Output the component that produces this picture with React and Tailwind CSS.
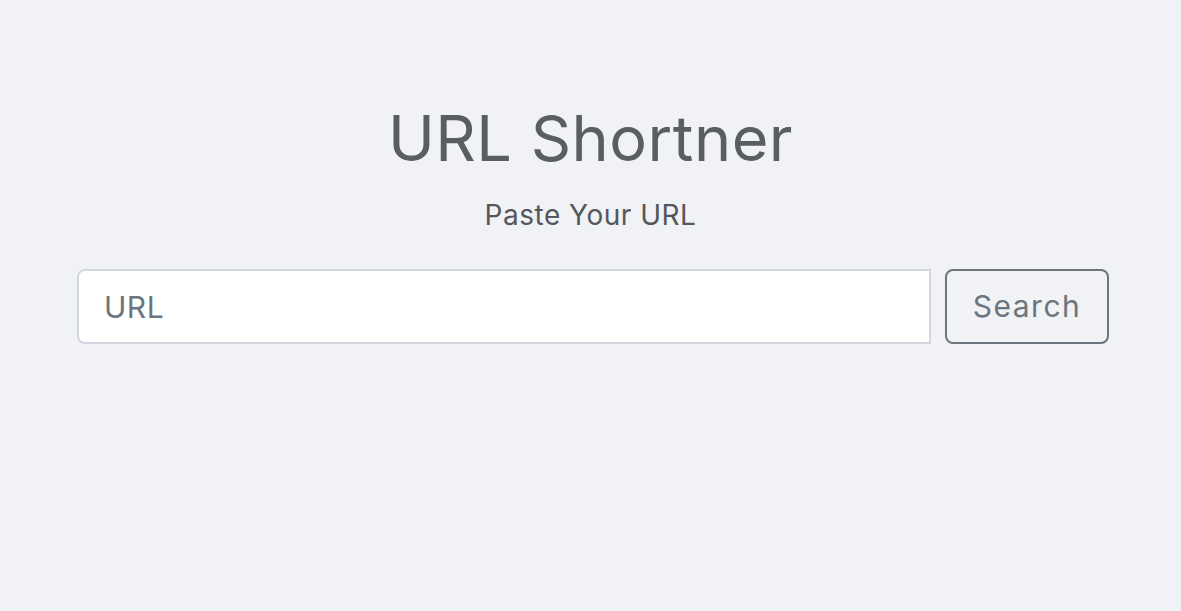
export default function App() {
  return (
    <div className="min-h-[611px] w-full bg-[#f0f2f5]" style={{ fontFamily: 'Inter, "Noto Sans", sans-serif' }}>
      <div className="flex flex-col items-center pt-[100px]">
        <h1 className="text-[63px] leading-[76px] font-normal tracking-[0.5px] text-[#5a5d61]">URL Shortner</h1>
        <p className="mt-[22px] text-[28px] leading-[34px] tracking-[0.5px] text-[#54575b]">Paste Your URL</p>
      </div>
      <div className="mt-[37px] ml-[77px] flex w-[1032px] gap-[14px]">
        <input
          type="text"
          placeholder="URL"
          className="h-[75px] flex-1 rounded-l-[8px] border-2 border-[#d3d7dd] bg-white pl-[25px] text-[30px] tracking-[0.5px] text-[#6c757d] placeholder:text-[#6c757d] outline-none"
        />
        <button className="h-[75px] w-[164px] rounded-[8px] border-2 border-[#6c757d] text-[30px] tracking-[1.5px] text-[#6c757d]">
          Search
        </button>
      </div>
    </div>
  );
}
